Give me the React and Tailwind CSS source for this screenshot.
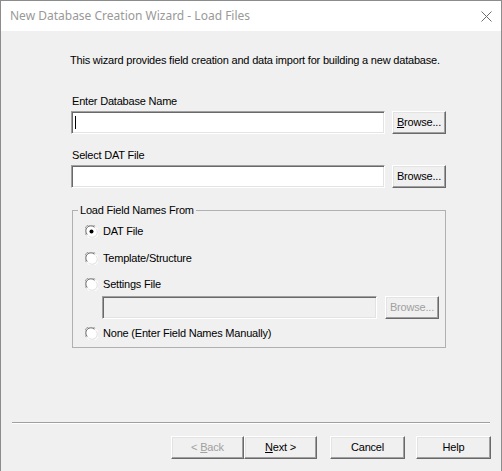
import React from "react";

const font = { fontFamily: '"Liberation Sans", Arial, sans-serif' };

const Radio = ({ checked }) => (
  <svg width="13" height="13" viewBox="0 0 13 13" className="shrink-0">
    <circle cx="6.5" cy="6.5" r="6" fill="#ffffff" />
    <path d="M1.3 10.2 A6 6 0 0 1 10.2 1.3" stroke="#a0a0a0" strokeWidth="1" fill="none" />
    <path d="M2.3 9.5 A4.9 4.9 0 0 1 9.5 2.3" stroke="#696969" strokeWidth="1" fill="none" />
    <path d="M11.7 2.8 A6 6 0 0 1 2.8 11.7" stroke="#ffffff" strokeWidth="1" fill="none" />
    <path d="M10.7 3.5 A4.9 4.9 0 0 1 3.5 10.7" stroke="#e3e3e3" strokeWidth="1" fill="none" />
    {checked && <circle cx="6.5" cy="6.5" r="2" fill="#000000" />}
  </svg>
);

const TextBox = ({ className = "", disabled, caret }) => (
  <div
    className={
      "h-[23px] border border-t-[#a0a0a0] border-l-[#a0a0a0] border-r-white border-b-white shadow-[inset_1px_1px_#696969,inset_-1px_-1px_#e3e3e3] flex items-center pl-[2px] " +
      (disabled ? "bg-[#f0f0f0] " : "bg-white ") +
      className
    }
  >
    {caret && <span className="block w-px h-[13px] bg-black ml-px" />}
  </div>
);

const Button = ({ children, className = "", disabled }) => (
  <button
    className={
      "h-[23px] border border-t-white border-l-white border-r-[#696969] border-b-[#696969] shadow-[inset_-1px_-1px_#a0a0a0,inset_1px_1px_#e3e3e3] bg-[#f0f0f0] text-[11px] tracking-[-0.2px] flex items-center justify-center " +
      (disabled ? "text-[#a0a0a0] " : "text-black ") +
      className
    }
    style={font}
  >
    {children}
  </button>
);

export default function App() {
  return (
    <div className="w-[502px] h-[471px] border border-[#8c8c8c] border-b-0 bg-[#f0f0f0] flex flex-col overflow-hidden" style={font}>
      {/* title bar */}
      <div className="h-[30px] bg-white flex items-center justify-between pl-[9px] pr-[9px] shrink-0">
        <span className="text-[12px] text-[#999999]" style={{ fontFamily: '"Noto Sans", "Open Sans", sans-serif' }}>
          New Database Creation Wizard - Load Files
        </span>
        <svg width="11" height="11" viewBox="0 0 11 11">
          <path d="M0.5 0.5 L10.5 10.5 M10.5 0.5 L0.5 10.5" stroke="#6e6e6e" strokeWidth="1" />
        </svg>
      </div>

      {/* body */}
      <div className="flex flex-col text-[11px] tracking-[-0.2px] text-black pl-[69px] pr-[55px]">
        <p className="mt-[22px] leading-[14px] whitespace-nowrap">
          This wizard provides field creation and data import for building a new database.
        </p>

        <label className="mt-[27px] ml-[2px] leading-[14px]">Enter Database Name</label>
        <div className="flex mt-[3px] ml-[1px] gap-[7px]">
          <TextBox className="w-[314px]" caret />
          <Button className="w-[54px]">
            <span><u>B</u>rowse...</span>
          </Button>
        </div>

        <label className="mt-[14px] ml-[2px] leading-[14px]">Select DAT File</label>
        <div className="flex mt-[3px] ml-[1px] gap-[7px]">
          <TextBox className="w-[314px]" />
          <Button className="w-[54px]">Browse...</Button>
        </div>

        <fieldset className="mt-[15px] ml-[2px] w-[374px] h-[145px] border border-[#b0b0b0] px-0 pt-[7px]">
          <legend className="px-[2px] ml-[5px] leading-[14px]">Load Field Names From</legend>
          <div className="flex flex-col pl-[12px]">
            <div className="flex items-center gap-[5px] h-[14px]">
              <Radio checked />
              <span>DAT File</span>
            </div>
            <div className="flex items-center gap-[5px] h-[14px] mt-[13px]">
              <Radio />
              <span>Template/Structure</span>
            </div>
            <div className="flex items-center gap-[5px] h-[14px] mt-[12px]">
              <Radio />
              <span>Settings File</span>
            </div>
            <div className="flex ml-[17px] mt-[5px] gap-[8px]">
              <TextBox className="w-[275px]" disabled />
              <Button className="w-[54px]" disabled>Browse...</Button>
            </div>
            <div className="flex items-center gap-[5px] h-[14px] mt-[7px]">
              <Radio />
              <span>None (Enter Field Names Manually)</span>
            </div>
          </div>
        </fieldset>
      </div>

      {/* separator */}
      <div className="mt-[74px] ml-[11px] mr-[11px] h-[2px] border-t border-[#a0a0a0] border-b border-b-white" />

      {/* buttons */}
      <div className="flex mt-[12px] pl-[170px]">
        <Button className="w-[73px] h-[23px]" disabled>
          <span>&lt; <u>B</u>ack</span>
        </Button>
        <Button className="w-[73px] h-[23px]">
          <span><u>N</u>ext &gt;</span>
        </Button>
        <Button className="w-[75px] h-[23px] ml-[13px]">Cancel</Button>
        <Button className="w-[75px] h-[23px] ml-[11px]">Help</Button>
      </div>
    </div>
  );
}
